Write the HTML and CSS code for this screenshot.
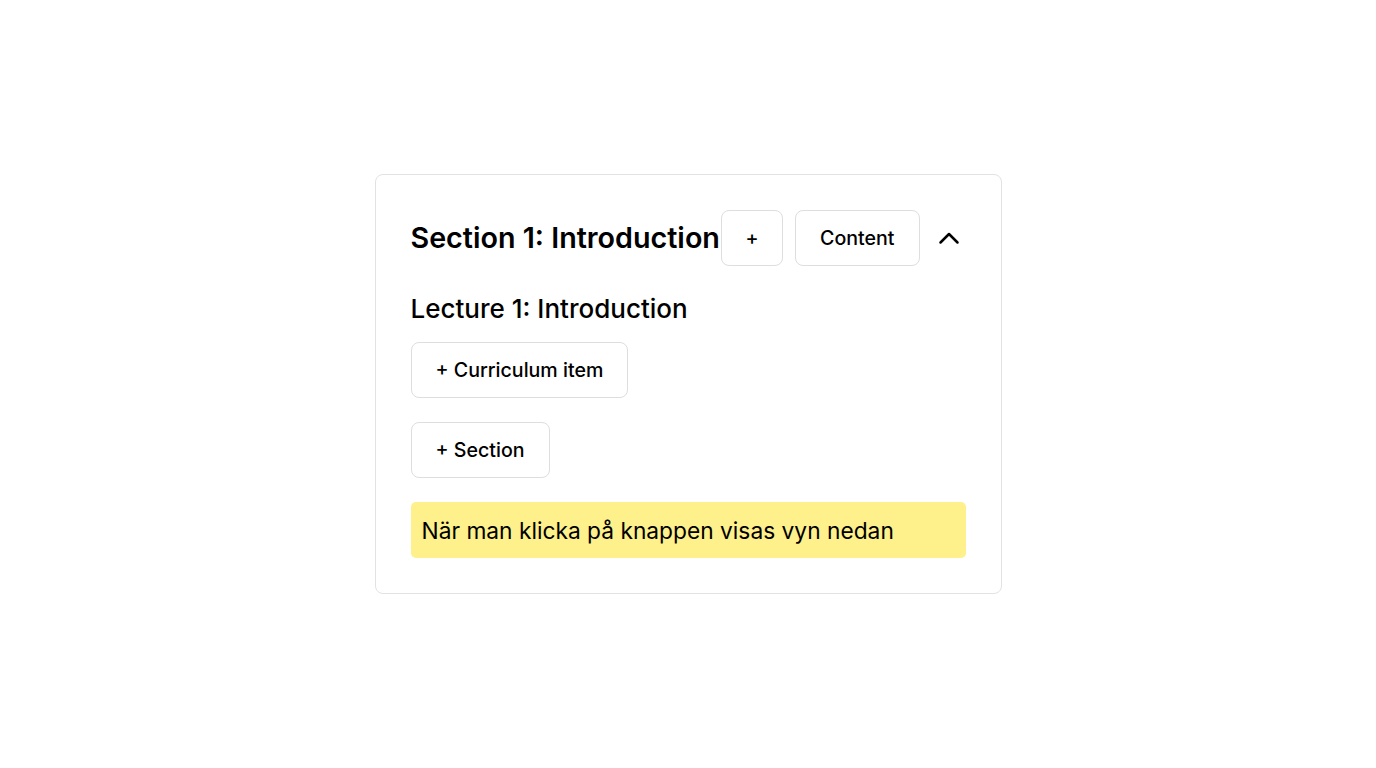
FILE: index.html
```html
<!DOCTYPE html>
<html>
<head>
<meta charset="utf-8">
<link rel="stylesheet" href="styles.css">
</head>
<body>
<main class="page">
  <section class="card">
    <header class="section-head">
      <h2 class="section-title">Section 1: Introduction</h2>
      <div class="head-actions">
        <button class="btn btn-square">+</button>
        <button class="btn">Content</button>
        <button class="chevron" aria-label="Collapse">
          <svg width="24" height="24" viewBox="0 0 24 24" fill="none" stroke="#000" stroke-width="2.5" stroke-linecap="round" stroke-linejoin="round"><path d="M3.5 16.5l8.5-8.5 8.5 8.5"/></svg>
        </button>
      </div>
    </header>
    <h3 class="lecture">Lecture 1: Introduction</h3>
    <div class="row"><button class="btn">+ Curriculum item</button></div>
    <div class="row"><button class="btn">+ Section</button></div>
    <div class="note">När man klicka på knappen visas vyn nedan</div>
  </section>
</main>
</body>
</html>
```
FILE: styles.css
```css
* { box-sizing: border-box; }
html, body { margin: 0; padding: 0; background: #fff; }
body { font-family: Inter, "Noto Sans", sans-serif; color: #000; }
.page {
  height: 768px;
  display: flex;
  align-items: center;
  justify-content: center;
}
.card {
  width: 627px;
  border: 1px solid #e2e2e2;
  border-radius: 8px;
  padding: 35px;
  background: #fff;
}
.section-head {
  display: flex;
  align-items: center;
  height: 56px;
}
.section-title {
  margin: 0;
  font-size: 28.7px;
  font-weight: 600;
  flex: 1;
  min-width: 0;
  white-space: nowrap;
  line-height: 1.2;
}
.head-actions {
  display: flex;
  align-items: center;
  gap: 12px;
  flex-shrink: 0;
}
.btn {
  font-family: Inter, "Noto Sans", sans-serif;
  font-size: 19.6px;
  font-weight: 500;
  color: #000;
  background: #fff;
  border: 1px solid #dedede;
  border-radius: 8px;
  height: 56px;
  padding: 0 24px;
  cursor: pointer;
}
.btn-square { width: 62px; padding: 0; }
.chevron {
  width: 34px;
  height: 34px;
  border: 0;
  background: none;
  padding: 0;
  display: flex;
  align-items: center;
  justify-content: center;
}
.lecture {
  margin: 26px 0 16px;
  font-size: 26px;
  font-weight: 500;
  line-height: 34px;
}
.row { margin-bottom: 24px; }
.note {
  background: #fef08a;
  border-radius: 5px;
  height: 56px;
  display: flex;
  align-items: center;
  padding: 0 11px;
  font-size: 22.75px;
}
```
